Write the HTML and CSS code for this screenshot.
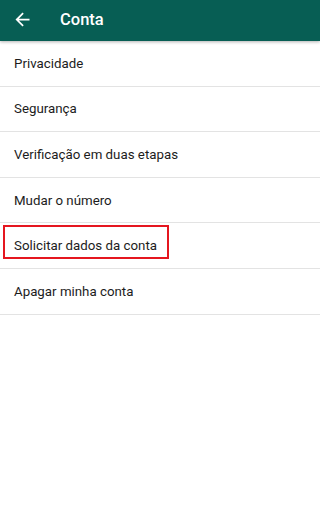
FILE: index.html
```html
<!DOCTYPE html>
<html lang="pt">
<head>
<meta charset="utf-8">
<link rel="stylesheet" href="styles.css">
</head>
<body>
<header class="appbar">
  <svg class="back" viewBox="0 0 24 24" width="21" height="21" aria-hidden="true">
    <path d="M20 11H7.83l5.59-5.59L12 4l-8 8 8 8 1.41-1.41L7.83 13H20v-2z" fill="#fff"/>
  </svg>
  <h1 class="title">Conta</h1>
</header>
<ul class="list">
  <li class="item">Privacidade</li>
  <li class="item">Segurança</li>
  <li class="item">Verificação em duas etapas</li>
  <li class="item">Mudar o número</li>
  <li class="item highlighted">Solicitar dados da conta<span class="mark"></span></li>
  <li class="item">Apagar minha conta</li>
</ul>
</body>
</html>
```
FILE: styles.css
```css
html, body {
  margin: 0;
  padding: 0;
  background: #ffffff;
  font-family: Roboto, "Liberation Sans", sans-serif;
}
.appbar {
  height: 41px;
  background: #075e54;
  display: flex;
  align-items: center;
  padding-left: 12px;
  box-shadow: 0 1px 3px rgba(0,0,0,0.3);
  position: relative;
  z-index: 1;
}
.back {
  display: block;
  margin-top: -2px;
}
.title {
  margin: -2px 0 0 27px;
  color: #ffffff;
  font-size: 16.5px;
  font-weight: 500;
}
.list {
  list-style: none;
  margin: 0;
  padding: 0;
}
.item {
  height: 44.6px;
  border-bottom: 1px solid #e3e3e3;
  display: flex;
  align-items: center;
  padding-left: 14px;
  font-size: 13.3px;
  color: #1c1c1c;
  position: relative;
}
.mark {
  position: absolute;
  left: 3px;
  top: 2px;
  width: 162px;
  height: 30px;
  border: 2px solid #e5161f;
}
```
